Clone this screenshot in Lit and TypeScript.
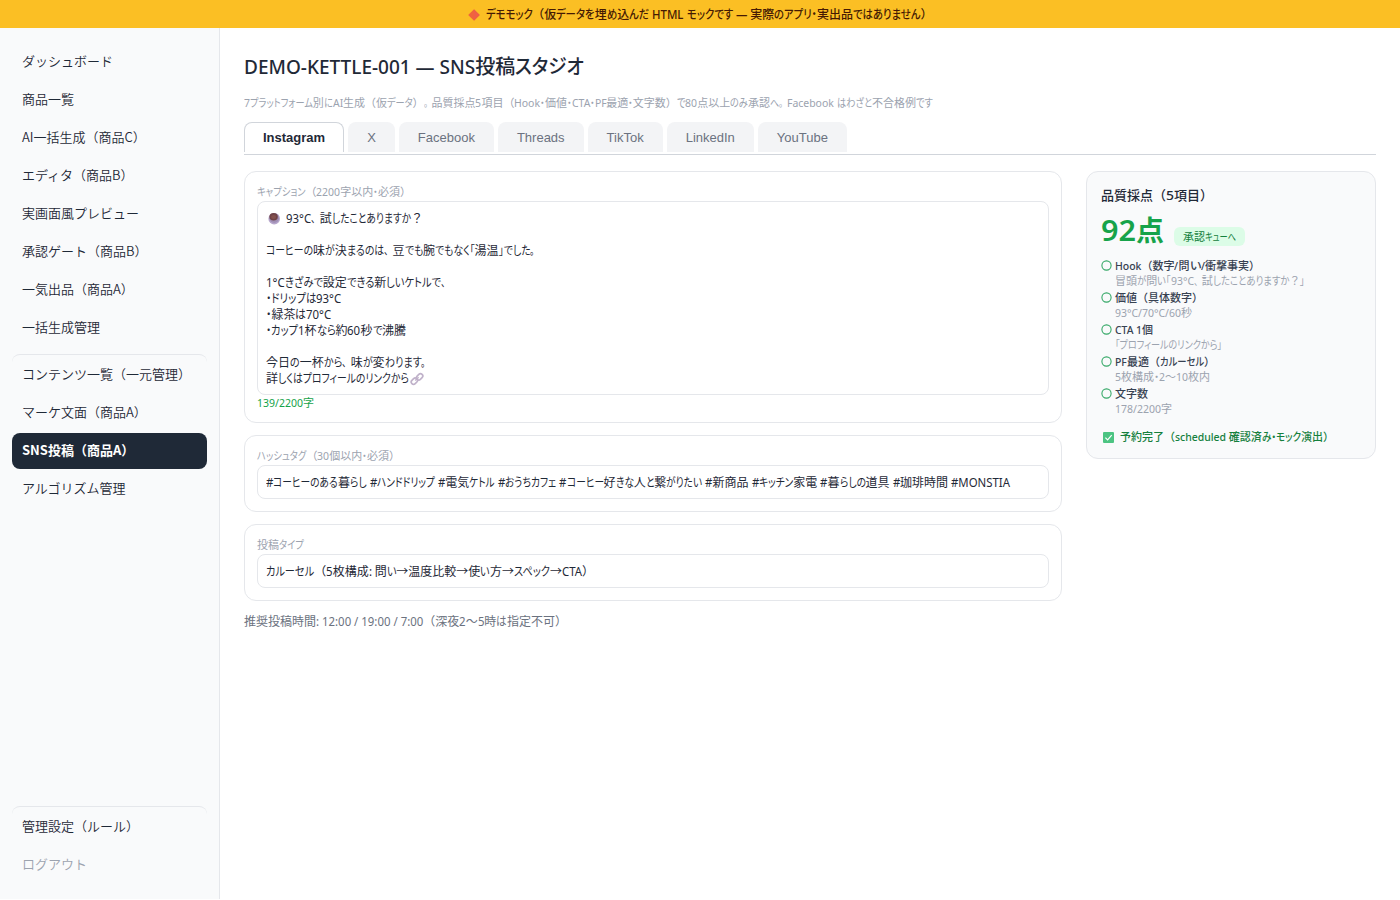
import { LitElement, html, css, svg } from "lit";
import { customElement, property } from "lit/decorators.js";
import { classMap } from "lit/directives/class-map.js";
import { styleMap } from "lit/directives/style-map.js";

type Kind = "kana" | "latin" | "han" | "mark";
interface Run { kind: Kind; text: string }

const kindOf = (ch: string): Kind =>
  /[、。]/.test(ch) ? "mark"
    : /[\u3040-\u30ff「」]/.test(ch) ? "kana"
    : /[\u0020-\u024f—]/.test(ch) ? "latin" : "han";

const splitRuns = (text: string): Run[] => {
  const runs: Run[] = [];
  for (const ch of text) {
    const kind = kindOf(ch);
    const last = runs[runs.length - 1];
    if (last && last.kind === kind) last.text += ch;
    else runs.push({ kind, text: ch });
  }
  return runs;
};

const MARK_SCALE = 0.72;

/** One line of text set in condensed kana so that it takes the given measure. */
@customElement("fit-text")
export class FitText extends LitElement {
  @property() text = "";
  @property({ type: Number }) w = 0;
  @property({ attribute: false }) widths: number[] = [];

  static styles = css`
    :host { display: inline-block; white-space: pre; }
    .run { display: inline-block; }
    .ink { display: inline-block; transform-origin: 0 50%; }
    .kana { font-feature-settings: "palt"; }
  `;

  firstUpdated() {
    const inks = Array.from(this.renderRoot.querySelectorAll<HTMLElement>(".ink"));
    this.widths = inks.map((el) => el.getBoundingClientRect().width);
  }

  render() {
    const runs = splitRuns(this.text);
    const sum = (k: Kind) =>
      runs.reduce((t, r, i) => t + (r.kind === k ? this.widths[i] ?? 0 : 0), 0);
    const kana = sum("kana"), latin = sum("latin"), fixed = sum("han") + sum("mark") * MARK_SCALE;
    let latinScale = 0.95;
    let kanaScale = 1;
    if (kana) {
      kanaScale = (this.w - fixed - latin * latinScale) / kana;
      if (kanaScale < 0.6 || kanaScale > 1.1) {
        kanaScale = Math.min(1.1, Math.max(0.6, kanaScale));
        if (latin) latinScale = Math.min(1.1, Math.max(0.85, (this.w - fixed - kana * kanaScale) / latin));
      }
    } else if (latin) {
      latinScale = Math.min(1.1, Math.max(0.85, (this.w - fixed) / latin));
    }
    const scales: Record<Kind, number> = { kana: kanaScale, latin: latinScale, han: 1, mark: MARK_SCALE };
    return runs.map((r, i) => {
      const s = scales[r.kind];
      const n = this.widths[i];
      const outer = n ? { width: `${n * s}px` } : {};
      const inner = n && s !== 1 ? { transform: `scaleX(${s})` } : {};
      return html`<span class="run" style=${styleMap(outer)}><span class="ink ${r.kind}" style=${styleMap(inner)}>${r.text}</span></span>`;
    });
  }
}

const fit = (text: string, w: number) => html`<fit-text .text=${text} .w=${w}></fit-text>`;

const diamond = svg`<svg class="ico" width="12" height="12" viewBox="0 0 12 12"><path d="M6 .2 11.8 6 6 11.8 .2 6z" fill="#f0643c"/><path d="M6 .2 11.8 6 6 11.8z" fill="#ee5a52" opacity=".5"/></svg>`;
const coffee = svg`<svg class="ico bean" width="13" height="13" viewBox="0 0 13 13"><circle cx="6.2" cy="6.7" r="5.8" fill="#b6a6cb"/><circle cx="6.2" cy="6.2" r="4.8" fill="#a08fb5"/><ellipse cx="5.6" cy="4.8" rx="4.2" ry="3.8" fill="#704347"/><ellipse cx="5.6" cy="5.1" rx="2.5" ry="2" fill="#83514e"/></svg>`;
const link = svg`<svg class="ico link" width="14" height="14" viewBox="0 0 14 14" fill="none" stroke="#c0b2ca" stroke-width="1.7"><rect x="6.1" y="2.6" width="7" height="4.6" rx="2.3" transform="rotate(-45 9.6 4.9)"/><rect x=".9" y="6.9" width="7" height="4.6" rx="2.3" transform="rotate(-45 4.4 9.2)"/><path d="M5.2 8.6 8.6 5.2" stroke-width="1.4"/></svg>`;
const check = svg`<svg class="ico" width="11" height="11" viewBox="0 0 11 11"><rect width="11" height="11" rx="1" fill="#4cc482"/><path d="M2.4 5.6 4.6 7.8 8.7 3.2" fill="none" stroke="#fff" stroke-width="1.2"/></svg>`;
const ring = svg`<svg class="ring" width="11" height="11" viewBox="0 0 11 11"><circle cx="5.5" cy="5.5" r="4.6" fill="none" stroke="#35a867" stroke-width="1.1"/></svg>`;

interface NavItem { label: string; active?: boolean; divided?: boolean; muted?: boolean; low?: boolean }
const NAV: NavItem[] = [
  { label: "ダッシュボード" },
  { label: "商品一覧" },
  { label: "AI一括生成（商品C）" },
  { label: "エディタ（商品B）" },
  { label: "実画面風プレビュー" },
  { label: "承認ゲート（商品B）" },
  { label: "一気出品（商品A）" },
  { label: "一括生成管理" },
  { label: "コンテンツ一覧（一元管理）", divided: true },
  { label: "マーケ文面（商品A）", low: true },
  { label: "SNS投稿（商品A）", active: true, low: true },
  { label: "アルゴリズム管理", low: true },
];
const NAV_END: NavItem[] = [
  { label: "管理設定（ルール）", divided: true },
  { label: "ログアウト", muted: true, low: true },
];
const TABS = ["Instagram", "X", "Facebook", "Threads", "TikTok", "LinkedIn", "YouTube"];

const CAPTION: [string, number][] = [
  ["93°C、試したことありますか？", 137],
  ["", 0],
  ["コーヒーの味が決まるのは、豆でも腕でもなく「湯温」でした。", 273],
  ["", 0],
  ["1°Cきざみで設定できる新しいケトルで、", 184],
  ["・ドリップは93°C", 75.5],
  ["・緑茶は70°C", 65.5],
  ["・カップ1杯なら約60秒で沸騰", 140],
  ["", 0],
  ["今日の一杯から、味が変わります。", 164],
  ["詳しくはプロフィールのリンクから", 143],
];
const CHECKS: [string, number, string, number][] = [
  ["Hook（数字/問い/衝撃事実）", 145, "冒頭が問い「93°C、試したことありますか？」", 190],
  ["価値（具体数字）", 88, "93°C/70°C/60秒", 77],
  ["CTA 1個", 38, "「プロフィールのリンクから」", 107],
  ["PF最適（カルーセル）", 100, "5枚構成・2〜10枚内", 95],
  ["文字数", 33, "178/2200字", 57],
];

@customElement("app-root")
export class AppRoot extends LitElement {
  static styles = css`
    :host {
      display: flex; flex-direction: column; height: 899px; background: #fff; color: #1f2937;
      font-family: "Noto Sans", "Noto Sans CJK JP", sans-serif; font-size: 12px; line-height: 16px;
    }
    * { box-sizing: border-box; }
    svg { display: block; flex: none; }
    .banner {
      height: 28px; flex: none; display: flex; align-items: center; justify-content: center; gap: 6px;
      background: #fbbf24; color: #451a03; font-weight: 500; padding-top: 1px;
    }
    .body { flex: 1; display: flex; min-height: 0; }
    .side {
      width: 220px; flex: none; display: flex; flex-direction: column; gap: 2px;
      padding: 15px 12px 16px; background: #f9fafb; border-right: 1px solid #e5e7eb;
      font-family: "Noto Sans CJK JP", sans-serif; font-size: 13px;
    }
    .nav {
      height: 36px; flex: none; padding: 0 10px 1px; border-radius: 8px; display: flex; align-items: center;
      white-space: nowrap; font-weight: 350;
    }
    .divided { height: 39px; margin-top: 7px; padding-top: 1px; padding-bottom: 2px; border-top: 1px solid #e5e7eb; }
    .low { padding-bottom: 3px; }
    .active { background: #1f2937; color: #fff; font-weight: 700; }
    .muted { color: #9ca3af; }
    .spacer { flex: 1; }
    .main { flex: 1; min-width: 0; padding: 24px; }
    .title { margin: 0; height: 30px; line-height: 30px; font-size: 20px; font-weight: 500; }
    .sub { height: 16px; margin-top: 13px; font-size: 11px; color: #9ca3af; }
    .tabs {
      display: flex; align-items: flex-start; gap: 4px; height: 34px; margin-top: 10px; padding-top: 1px;
      border-bottom: 1px solid #d1d5db; font: 13px/16px "Liberation Sans", Arial, sans-serif;
    }
    .tab {
      height: 30px; padding: 7px 18px 6px; border: 1px solid transparent; border-bottom: 0;
      border-radius: 8px 8px 0 0; background: #f3f4f6; color: #6b7280;
    }
    .tab.on { background: #fff; border-color: #d1d5db; color: #1f2937; font-weight: 700; }
    .cols { display: grid; grid-template-columns: 818px 290px; gap: 24px; margin-top: 16px; align-items: start; }
    .stack { display: flex; flex-direction: column; gap: 12px; }
    .card { border: 1px solid #e5e7eb; border-radius: 12px; padding: 12px; }
    .label { height: 17px; line-height: 16px; font-size: 11px; color: #9ca3af; }
    .box { border: 1px solid #e5e7eb; border-radius: 8px; padding: 9px 8px 7px; }
    .line { height: 16px; display: flex; align-items: center; }
    .bean { margin: -2px 5px 0 2px; }
    .link { margin-left: 1px; }
    .count { height: 15px; font-size: 11px; color: #16a34a; line-height: 16px; }
    .note { color: #6b7280; margin-top: 1px; }
    .panel { background: #f9fafb; padding: 15px 14px 13px; height: 288px; }
    .ptitle { font-size: 13px; font-weight: 500; height: 16px; }
    .score { display: flex; height: 40px; margin-top: 7px; gap: 10px; }
    .num { font-size: 28px; line-height: 40px; font-weight: 600; color: #16a34a; }
    .badge {
      height: 19px; margin-top: 17px; padding: 1px 9px; border-radius: 6px; font-size: 11px; line-height: 18px;
      background: #dcfce7; color: #15803d;
    }
    .checks { margin-top: 8px; }
    .check { display: grid; grid-template-columns: 11px 1fr; column-gap: 3px; height: 32px; font-size: 11px; line-height: 15px; }
    .ring { margin-top: 2px; }
    .name { font-weight: 500; color: #374151; height: 15px; }
    .detail { color: #9ca3af; height: 15px; }
    .done { display: flex; align-items: center; gap: 6px; padding-left: 2px; margin-top: 11px; height: 16px; font-size: 11px; font-weight: 500; color: #15803d; }
  `;

  private nav = (n: NavItem) => html`
    <div class=${classMap({ nav: true, active: !!n.active, divided: !!n.divided, muted: !!n.muted, low: !!n.low })}>${n.label}</div>`;

  render() {
    return html`
      <div class="banner">${diamond}${fit("デモモック（仮データを埋め込んだ HTML モックです — 実際のアプリ・実出品ではありません）", 447)}</div>
      <div class="body">
        <nav class="side">${NAV.map(this.nav)}<div class="spacer"></div>${NAV_END.map(this.nav)}</nav>
        <main class="main">
          <h1 class="title">${fit("DEMO-KETTLE-001 — SNS投稿スタジオ", 340)}</h1>
          <div class="sub">${fit("7プラットフォーム別にAI生成（仮データ）。品質採点5項目（Hook・価値・CTA・PF最適・文字数）で80点以上のみ承認へ。Facebook はわざと不合格例です", 689)}</div>
          <div class="tabs">${TABS.map((t, i) => html`<div class=${classMap({ tab: true, on: i === 0 })}>${t}</div>`)}</div>
          <div class="cols">
            <div class="stack">
              <section class="card">
                <div class="label">${fit("キャプション（2200字以内・必須）", 154)}</div>
                <div class="box">${CAPTION.map(([t, w], i) => html`<div class="line">${i === 0 ? coffee : ""}${t ? fit(t, w) : ""}${i === CAPTION.length - 1 ? link : ""}</div>`)}</div>
                <div class="count">${fit("139/2200字", 57)}</div>
              </section>
              <section class="card">
                <div class="label">${fit("ハッシュタグ（30個以内・必須）", 143)}</div>
                <div class="box"><div class="line">${fit("#コーヒーのある暮らし #ハンドドリップ #電気ケトル #おうちカフェ #コーヒー好きな人と繋がりたい #新商品 #キッチン家電 #暮らしの道具 #珈琲時間 #MONSTIA", 744)}</div></div>
              </section>
              <section class="card">
                <div class="label">${fit("投稿タイプ", 47)}</div>
                <div class="box"><div class="line">${fit("カルーセル（5枚構成: 問い→温度比較→使い方→スペック→CTA）", 328)}</div></div>
              </section>
              <div class="note">${fit("推奨投稿時間: 12:00 / 19:00 / 7:00（深夜2〜5時は指定不可）", 323)}</div>
            </div>
            <aside class="card panel">
              <div class="ptitle">${fit("品質採点（5項目）", 112)}</div>
              <div class="score"><div class="num">${fit("92点", 63)}</div><div class="badge">${fit("承認キューへ", 53)}</div></div>
              <div class="checks">${CHECKS.map(([n, nw, d, dw]) => html`
                <div class="check">${ring}<div><div class="name">${fit(n, nw)}</div><div class="detail">${fit(d, dw)}</div></div></div>`)}</div>
              <div class="done">${check}${fit("予約完了（scheduled 確認済み・モック演出）", 214)}</div>
            </aside>
          </div>
        </main>
      </div>`;
  }
}
